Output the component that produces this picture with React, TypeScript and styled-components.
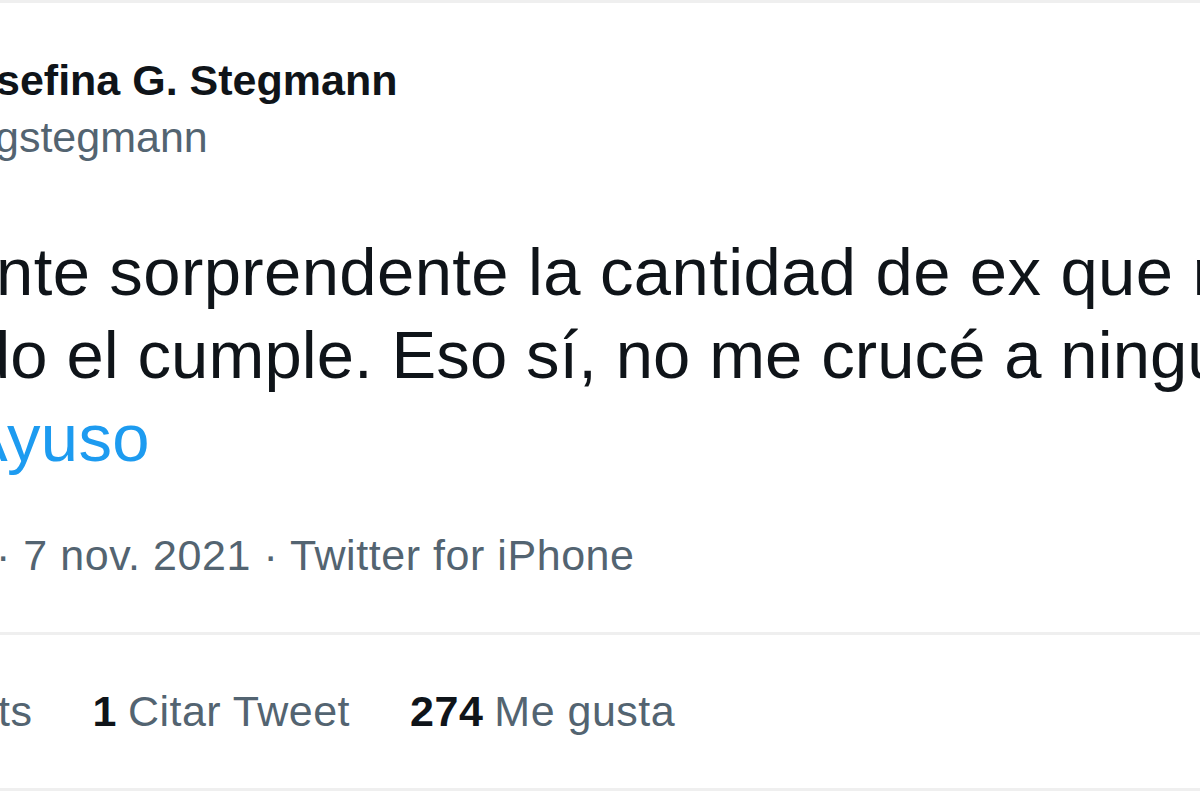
import React from "react";
import styled, { createGlobalStyle } from "styled-components";

const GlobalStyle = createGlobalStyle`
  html, body {
    margin: 0;
    padding: 0;
    background: #ffffff;
  }
  body {
    font-family: "Liberation Sans", Arial, sans-serif;
    overflow: hidden;
  }
`;

const Card = styled.article`
  width: 1200px;
  height: 800px;
  box-sizing: border-box;
  border-top: 3px solid #efefef;
  overflow: hidden;
  display: flex;
  flex-direction: column;
  background: #fff;
  white-space: nowrap;
`;

const Header = styled.header`
  display: flex;
  flex-direction: column;
  padding-top: 49px;
`;

const Name = styled.div<{ $shift: number }>`
  font-size: 43px;
  line-height: 57px;
  font-weight: 700;
  color: #0f1419;
  margin-left: ${(p) => -p.$shift}px;
`;

const Handle = styled.div<{ $shift: number }>`
  font-size: 43px;
  line-height: 57px;
  color: #536471;
  margin-left: ${(p) => -p.$shift}px;
`;

const Body = styled.div`
  display: flex;
  flex-direction: column;
  margin-top: 64px;
`;

const BodyLine = styled.div<{ $shift: number; $spacing?: number }>`
  font-size: 67px;
  line-height: 83px;
  letter-spacing: ${(p) => p.$spacing ?? 0.4}px;
  color: #0f1419;
  margin-left: ${(p) => -p.$shift}px;
`;

const Tag = styled(BodyLine)`
  color: #1d9bf0;
`;

const Meta = styled.div<{ $shift: number }>`
  margin-top: 48px;
  font-size: 43px;
  line-height: 57px;
  letter-spacing: 0.55px;
  color: #536471;
  margin-left: ${(p) => -p.$shift}px;
`;

const Divider = styled.hr`
  margin: 48px 0 0;
  border: 0;
  height: 3px;
  background: #efefef;
  flex-shrink: 0;
`;

const Stats = styled.div<{ $shift: number }>`
  margin-top: 48px;
  display: flex;
  gap: 60px;
  font-size: 43px;
  line-height: 57px;
  letter-spacing: 0.5px;
  margin-left: ${(p) => -p.$shift}px;
`;

const Stat = styled.span`
  display: inline-flex;
  gap: 11px;
`;

const Count = styled.b`
  color: #0f1419;
  font-weight: 700;
`;

const Label = styled.span`
  color: #536471;
`;

export default function App() {
  return (
    <>
      <GlobalStyle />
      <Card>
        <Header>
          <Name $shift={4}>sefina G. Stegmann</Name>
          <Handle $shift={5}>gstegmann</Handle>
        </Header>
        <Body>
          <BodyLine $shift={4}>nte sorprendente la cantidad de ex que m</BodyLine>
          <BodyLine $shift={27} $spacing={0.1}>
            do el cumple. Eso sí, no me crucé a ningu
          </BodyLine>
          <Tag $shift={37}>Ayuso</Tag>
        </Body>
        <Meta $shift={4}>· 7 nov. 2021 · Twitter for iPhone</Meta>
        <Divider />
        <Stats $shift={2}>
          <Stat>
            <Label>ts</Label>
          </Stat>
          <Stat>
            <Count>1</Count>
            <Label>Citar Tweet</Label>
          </Stat>
          <Stat>
            <Count>274</Count>
            <Label>Me gusta</Label>
          </Stat>
        </Stats>
        <Divider />
      </Card>
    </>
  );
}
